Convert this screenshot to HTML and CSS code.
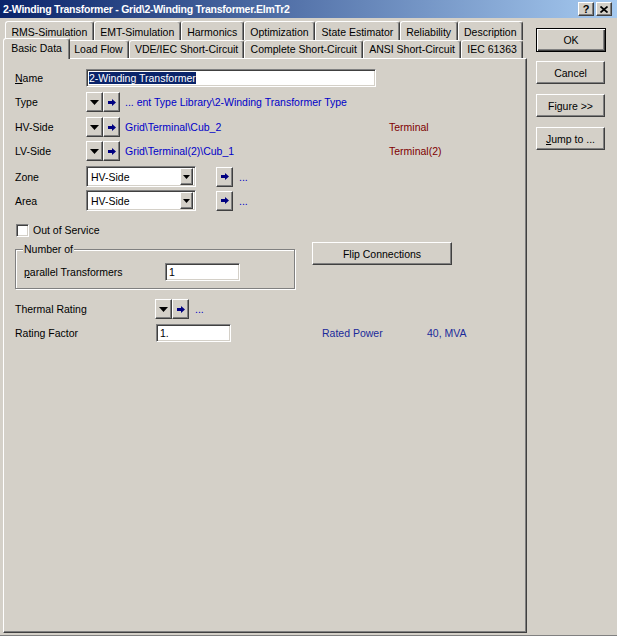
FILE: index.html
```html
<!DOCTYPE html>
<html lang="en">
<head>
    <meta charset="UTF-8">
    <title>2-Winding Transformer - Grid\2-Winding Transformer.ElmTr2</title>
    <link rel="stylesheet" href="styles.css">
</head>
<body>
    <div class="titlebar">
        <span class="title">2-Winding Transformer - Grid\2-Winding Transformer.ElmTr2</span>
        <div class="caption-btns">
            <span class="cbtn">?</span>
            <span class="cbtn"><svg width="8" height="7" viewBox="0 0 8 7"><path d="M0.5 0.5l7 6M7.5 0.5l-7 6" stroke="#000" stroke-width="1.7"/></svg></span>
        </div>
    </div>

    <div class="dialog">
        <div class="main">
            <div class="tabrow back">
                <div class="tab">RMS-Simulation</div>
                <div class="tab">EMT-Simulation</div>
                <div class="tab">Harmonics</div>
                <div class="tab">Optimization</div>
                <div class="tab">State Estimator</div>
                <div class="tab">Reliability</div>
                <div class="tab">Description</div>
            </div>
            <div class="tabrow front">
                <div class="tab active">Basic Data</div>
                <div class="tab">Load Flow</div>
                <div class="tab">VDE/IEC Short-Circuit</div>
                <div class="tab">Complete Short-Circuit</div>
                <div class="tab">ANSI Short-Circuit</div>
                <div class="tab">IEC 61363</div>
            </div>

            <div class="pane">
                <div class="row">
                    <span class="label"><u>N</u>ame</span>
                    <div class="edit name-edit"><span class="sel">2-Winding Transformer</span></div>
                </div>

                <div class="row r-type">
                    <span class="label">Type</span>
                    <span class="ibtn"><svg width="9" height="5" viewBox="0 0 9 5"><path d="M0 0h9L4.5 5z"/></svg></span>
                    <span class="ibtn"><svg width="8" height="7" viewBox="0 0 8 7"><path d="M0 2h4V0l4 3.5L4 7V5H0z" fill="#000080"/></svg></span>
                    <span class="ref">... ent Type Library\2-Winding Transformer Type</span>
                </div>

                <div class="row r-hv">
                    <span class="label">HV-Side</span>
                    <span class="ibtn"><svg width="9" height="5" viewBox="0 0 9 5"><path d="M0 0h9L4.5 5z"/></svg></span>
                    <span class="ibtn"><svg width="8" height="7" viewBox="0 0 8 7"><path d="M0 2h4V0l4 3.5L4 7V5H0z" fill="#000080"/></svg></span>
                    <span class="ref">Grid\Terminal\Cub_2</span>
                    <span class="terminal">Terminal</span>
                </div>

                <div class="row">
                    <span class="label">LV-Side</span>
                    <span class="ibtn"><svg width="9" height="5" viewBox="0 0 9 5"><path d="M0 0h9L4.5 5z"/></svg></span>
                    <span class="ibtn"><svg width="8" height="7" viewBox="0 0 8 7"><path d="M0 2h4V0l4 3.5L4 7V5H0z" fill="#000080"/></svg></span>
                    <span class="ref">Grid\Terminal(2)\Cub_1</span>
                    <span class="terminal">Terminal(2)</span>
                </div>

                <div class="row r-zone">
                    <span class="label">Zone</span>
                    <div class="combo">
                        <span class="combo-text">HV-Side</span>
                        <span class="drop"><svg width="7" height="4" viewBox="0 0 7 4"><path d="M0 0h7L3.5 4z"/></svg></span>
                    </div>
                    <span class="ibtn jump"><svg width="8" height="7" viewBox="0 0 8 7"><path d="M0 2h4V0l4 3.5L4 7V5H0z" fill="#000080"/></svg></span>
                    <span class="dots">...</span>
                </div>

                <div class="row r-area">
                    <span class="label">Area</span>
                    <div class="combo">
                        <span class="combo-text">HV-Side</span>
                        <span class="drop"><svg width="7" height="4" viewBox="0 0 7 4"><path d="M0 0h7L3.5 4z"/></svg></span>
                    </div>
                    <span class="ibtn jump"><svg width="8" height="7" viewBox="0 0 8 7"><path d="M0 2h4V0l4 3.5L4 7V5H0z" fill="#000080"/></svg></span>
                    <span class="dots">...</span>
                </div>

                <div class="row r-check">
                    <span class="checkbox"></span>
                    <span class="check-label">Out of Service</span>
                </div>

                <div class="row r-group">
                    <div class="group">
                        <span class="legend">Number of</span>
                        <div class="group-row">
                            <span class="group-label"><u>p</u>arallel Transformers</span>
                            <div class="edit num-edit">1</div>
                        </div>
                    </div>
                    <button class="btn flip">Flip Connections</button>
                </div>

                <div class="row r-thermal">
                    <span class="label wide">Thermal Rating</span>
                    <span class="ibtn"><svg width="9" height="5" viewBox="0 0 9 5"><path d="M0 0h9L4.5 5z"/></svg></span>
                    <span class="ibtn"><svg width="8" height="7" viewBox="0 0 8 7"><path d="M0 2h4V0l4 3.5L4 7V5H0z" fill="#000080"/></svg></span>
                    <span class="dots">...</span>
                </div>

                <div class="row r-rating">
                    <span class="label wider">Rating Factor</span>
                    <div class="edit num-edit">1.</div>
                    <span class="rated">Rated Power</span>
                    <span class="rated-val">40, MVA</span>
                </div>
            </div>
        </div>

        <div class="side">
            <button class="btn default">OK</button>
            <button class="btn">Cancel</button>
            <button class="btn">Figure &gt;&gt;</button>
            <button class="btn"><u>J</u>ump to ...</button>
        </div>
    </div>
</body>
</html>
```

FILE: styles.css
```css
* {
    margin: 0;
    padding: 0;
    box-sizing: border-box;
}

body {
    width: 617px;
    height: 636px;
    overflow: hidden;
    background-color: #d4d0c8;
    border-bottom: 1px solid #808080;
    font-family: "Liberation Sans", Arial, sans-serif;
    font-size: 10.5px;
    color: #000;
}

/* Title bar */
.titlebar {
    height: 18px;
    display: flex;
    align-items: center;
    background: linear-gradient(to right, #0a246a, #a6caf0);
    color: #fff;
}

.title {
    flex: 1;
    padding-left: 3px;
    font-weight: bold;
    font-size: 10.5px;
    letter-spacing: -0.25px;
    white-space: nowrap;
}

.caption-btns {
    display: flex;
    gap: 2px;
    margin-right: 5px;
}

.cbtn {
    width: 16px;
    height: 14px;
    display: flex;
    align-items: center;
    justify-content: center;
    background-color: #d4d0c8;
    color: #000;
    font-weight: bold;
    font-size: 11px;
    border: 1px solid;
    border-color: #fff #404040 #404040 #fff;
    box-shadow: inset -1px -1px #808080;
}

/* Dialog */
.dialog {
    display: flex;
}

.main {
    width: 524px;
    margin-left: 3px;
    padding-top: 3px;
}

.tabrow {
    display: flex;
    width: 518px;
    margin-left: 2px;
}

.tabrow.back {
    height: 19px;
}

.tabrow.front {
    height: 18px;
}

.tab {
    flex: 1 1 auto;
    padding: 2px 5px 0;
    line-height: 16px;
    text-align: center;
    white-space: nowrap;
    background-color: #d4d0c8;
    border: 1px solid;
    border-bottom: none;
    border-color: #fff #404040 transparent #fff;
    border-radius: 3px 3px 0 0;
    box-shadow: inset -1px 0 #808080;
}

.tabrow.front .tab {
    padding-top: 0;
}

.tabrow.front .tab.active {
    position: relative;
    z-index: 1;
    margin: -2px -2px -1px;
    padding: 1px 7px 0;
}

.pane {
    height: 575px;
    padding: 9px 0 0 11px;
    border: 1px solid;
    border-color: #fff #404040 #404040 #fff;
    box-shadow: inset -1px -1px #808080;
}

/* Rows */
.row {
    display: flex;
    align-items: center;
    height: 20px;
}

.r-type { margin-top: 4px; }
.r-hv { margin-top: 5px; }
.r-hv + .row { margin-top: 4px; }
.r-zone { margin-top: 5px; height: 21px; }
.r-area { margin-top: 3px; height: 21px; }
.r-check { margin-top: 11px; height: 16px; }
.r-group { margin-top: 4px; height: 47px; align-items: flex-start; }
.r-thermal { margin-top: 10px; }
.r-rating { margin-top: 5px; height: 18px; }

.label {
    width: 71px;
    flex: none;
}

.label.wide {
    width: 140px;
}

.label.wider {
    width: 141px;
}

/* Sunken edit fields */
.edit {
    height: 18px;
    padding: 2px 0 0 3px;
    line-height: 13px;
    background-color: #fff;
    border: 1px solid;
    border-color: #808080 #fff #fff #808080;
    box-shadow: inset 1px 1px #404040, inset -1px -1px #d4d0c8;
    white-space: nowrap;
}

.name-edit {
    width: 290px;
    padding-left: 2px;
}

.sel {
    background-color: #0a246a;
    color: #fff;
}

.num-edit {
    width: 75px;
}

/* Small raised buttons */
.ibtn {
    width: 17px;
    height: 20px;
    flex: none;
    display: flex;
    align-items: center;
    justify-content: center;
    background-color: #d4d0c8;
    border: 1px solid;
    border-color: #fff #404040 #404040 #fff;
    box-shadow: inset -1px -1px #808080;
}

.ref {
    width: 264px;
    margin-left: 5px;
    color: #0000c8;
    white-space: nowrap;
}

.terminal {
    color: #800000;
}

.dots {
    margin-left: 6px;
    color: #0000c8;
}

/* Combo boxes */
.combo {
    width: 110px;
    height: 21px;
    display: flex;
    align-items: center;
    background-color: #fff;
    border: 1px solid;
    border-color: #808080 #fff #fff #808080;
    box-shadow: inset 1px 1px #404040, inset -1px -1px #d4d0c8;
    padding: 2px 2px 2px 4px;
}

.combo-text {
    flex: 1;
}

.drop {
    width: 13px;
    height: 17px;
    display: flex;
    align-items: center;
    justify-content: center;
    background-color: #d4d0c8;
    border: 1px solid;
    border-color: #fff #404040 #404040 #fff;
    box-shadow: inset -1px -1px #808080;
}

.ibtn.jump {
    margin-left: 20px;
}

/* Checkbox */
.checkbox {
    width: 13px;
    height: 13px;
    margin-left: 1px;
    background-color: #fff;
    border: 1px solid;
    border-color: #808080 #fff #fff #808080;
    box-shadow: inset 1px 1px #404040, inset -1px -1px #d4d0c8;
}

.check-label {
    margin-left: 4px;
}

/* Group box */
.group {
    position: relative;
    width: 280px;
    height: 40px;
    margin-top: 7px;
    padding: 13px 0 0 8px;
    border: 1px solid #808080;
    box-shadow: inset 1px 1px #fff, 1px 1px #fff;
}

.legend {
    position: absolute;
    top: -7px;
    left: 7px;
    padding: 0 1px;
    line-height: 13px;
    background-color: #d4d0c8;
}

.group-row {
    display: flex;
    align-items: center;
}

.group-label {
    width: 141px;
}

/* Push buttons */
.btn {
    width: 69px;
    height: 23px;
    margin-bottom: 10px;
    font: inherit;
    color: #000;
    text-align: center;
    background-color: #d4d0c8;
    border: 1px solid;
    border-color: #fff #404040 #404040 #fff;
    box-shadow: inset -1px -1px #808080;
}

.btn.default {
    width: 70px;
    height: 24px;
    margin-bottom: 9px;
    border-color: #000;
    box-shadow: inset 1px 1px #fff, inset -1px -1px #404040, inset -2px -2px #808080;
}

.btn.flip {
    width: 140px;
    margin-left: 17px;
}

.side {
    display: flex;
    flex-direction: column;
    margin-left: 9px;
    padding-top: 10px;
}

.rated {
    width: 105px;
    margin-left: 91px;
    color: #1a2a9a;
}

.rated-val {
    color: #1a2a9a;
}
```
